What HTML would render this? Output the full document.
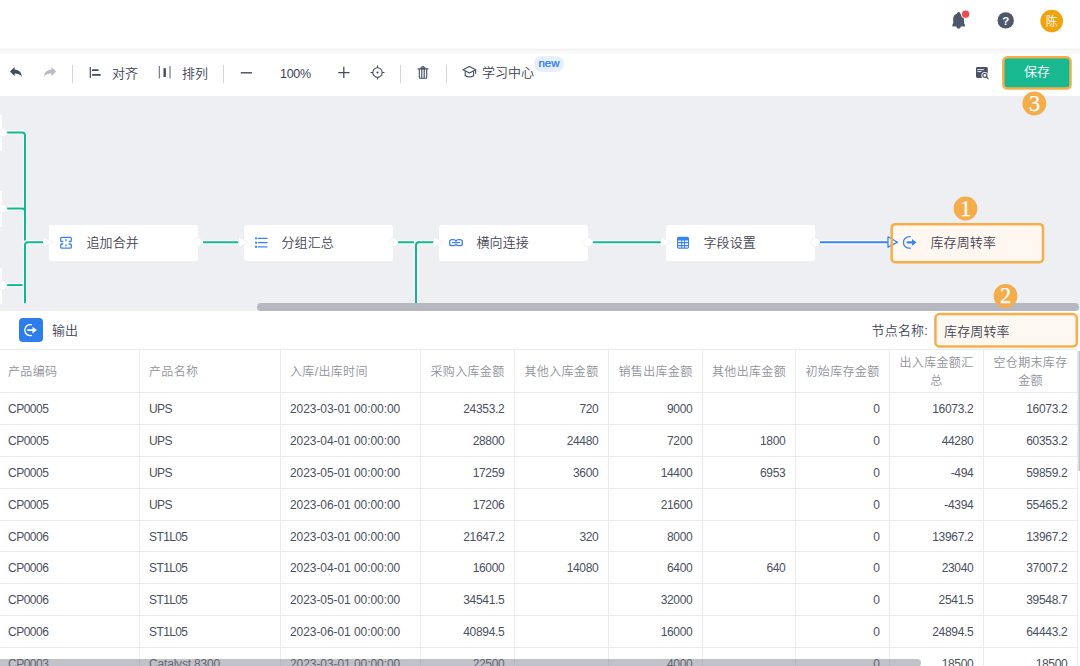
<!DOCTYPE html>
<html lang="zh-CN">
<head>
<meta charset="utf-8">
<title>库存周转率</title>
<style>
*{box-sizing:border-box;margin:0;padding:0}
html,body{width:1080px;height:666px;overflow:hidden;background:#fff}
body{position:relative;font-family:"Liberation Sans","Noto Sans CJK SC",sans-serif;color:#333;font-size:13px;font-weight:350}
.abs{position:absolute}
svg{display:block}
#topbar{left:0;top:0;width:1080px;height:49px;background:#fff}
#toolbar{left:0;top:49px;width:1080px;height:47px;background:#fff}
#tbshadow{left:0;top:48px;width:1080px;height:7px;background:linear-gradient(#fbfbfb,#f3f3f3 21%,#f8f8f8 45%,#fafafa 72%,#fff)}
.sep{width:1px;height:18px;top:65px;background:#d3d5da}
.tl{top:63px;height:20px;line-height:20px;font-size:13px;color:#3a4255;white-space:nowrap}
.newb{left:534px;top:56px;width:30px;height:16px;border-radius:8px;background:#e6effd;color:#3b82f6;font-size:11.500px;line-height:14px;text-align:center;text-shadow:0 0 .4px #3b82f6}
.save{left:1003px;top:57px;width:68px;height:32px;border-radius:5px;background:#18b991;color:#fff;font-size:13px;line-height:30px;text-align:center}
#canvas{left:0;top:96px;width:1080px;height:215px;background:#eeeff3;overflow:hidden}
.node{height:36px;width:149px;top:129px;background:#fff;border-radius:2px}
.node .t{position:absolute;left:37.400px;letter-spacing:.15px;top:0;height:36px;line-height:35px;font-size:13px;color:#3f4554;white-space:nowrap}
.node svg{position:absolute}
.hscroll{left:257px;top:207px;width:822px;height:8px;border-radius:4px;background:#b5b8c1}
#panel{left:0;top:311px;width:1080px;height:355px;background:#fff;overflow:hidden}
.obtn{left:19px;top:7px;width:24px;height:24px;border-radius:4px;background:#2f7deb}
.otitle{left:52px;top:10px;height:20px;line-height:20px;font-size:13px;color:#3f4554}
.nlabel{left:871.500px;top:10px;height:20px;line-height:20px;font-size:13px;color:#3f4554;white-space:nowrap;letter-spacing:.2px}
.ninput{left:935px;top:3px;width:142px;height:33px;border-radius:5px;background:#fff8f2;font-size:13px;line-height:35px;padding-left:9px;color:#3f4554;letter-spacing:.15px}
.vl{width:1px;top:38px;height:320px;background:#ebecee}
.hl{height:1px;left:0;width:1077px;background:#ebecee}
.th{top:40px;height:42px;font-size:12px;color:#8f929a;line-height:18px;letter-spacing:.35px;display:flex;align-items:center;white-space:nowrap}
.th.c{justify-content:center;text-align:center}
.td{height:31px;line-height:33px;font-size:12px;color:#4a5060;white-space:nowrap;letter-spacing:-0.3px}
.td.l0{letter-spacing:-0.5px}
.td.l1{letter-spacing:-0.6px}
.td.l2{letter-spacing:-0.07px}
.td.r{text-align:right}
.vthumb{left:1078px;top:40px;width:2px;height:120px;background:linear-gradient(90deg,#e9eaec,#c5c6cb 70%)}
.hthumb{left:-5px;top:348px;width:926px;height:8px;border-radius:4px;background:rgba(125,128,138,.48)}
</style>
</head>
<body>
<div id="topbar" class="abs"></div>
<div id="toolbar" class="abs"></div>
<div id="tbshadow" class="abs"></div>
<!-- bell -->
<svg class="abs" style="left:951px;top:11px;overflow:visible" width="20" height="20" viewBox="0 0 20 20"><path d="M7.600 .9C8.600 .9 9.300 1.600 9.300 2.700C11.600 3.400 13 5.200 13 7.600V12L13.900 13.800V15.600H9.800C9.800 16.900 8.800 17.800 7.600 17.800C6.400 17.800 5.500 16.900 5.500 15.600H1.400V13.800L2.200 12V7.600C2.200 5.200 3.600 3.400 5.900 2.700C5.900 1.600 6.600 .9 7.600 .9Z" fill="#4f586b"/><circle cx="14.600" cy="3.200" r="4.100" fill="#ef4a4f" stroke="#fff" stroke-width=".9"/></svg>
<svg class="abs" style="left:990px;top:0" width="90" height="48" viewBox="990 0 90 48"><circle cx="1005.700" cy="20.400" r="8.200" fill="#4f586b"/><circle cx="1051.700" cy="21.100" r="11.300" fill="#f0a30c"/><text x="1005.800" y="24.800" text-anchor="middle" font-family="'Liberation Sans',sans-serif" font-weight="bold" font-size="11.500" fill="#fff">?</text><text x="1051.700" y="25.700" text-anchor="middle" font-family="'Liberation Sans','Noto Sans CJK SC',sans-serif" font-size="12" fill="#fff">陈</text></svg>
<!-- undo / redo -->
<svg class="abs" style="left:9px;top:66px" width="14" height="12" viewBox="0 0 14 12"><path d="M5.600 1v2.600c4.400.3 6.900 2.800 7.400 7.200-1.800-2.400-4.100-3.300-7.400-3.300v2.700L1 5.600z" fill="#434c5e"/></svg>
<svg class="abs" style="left:43px;top:66px" width="14" height="12" viewBox="0 0 14 12"><path d="M8.400 1v2.600C4 3.900 1.500 6.400 1 10.800c1.800-2.400 4.100-3.300 7.400-3.300v2.700L13 5.600z" fill="#b9bcc4"/></svg>
<div class="abs sep" style="left:72px"></div>
<!-- align -->
<svg class="abs" style="left:88px;top:66px" width="14" height="13" viewBox="0 0 14 13"><path d="M2.300 .9v11.200" stroke="#434c5e" stroke-width="1.200" fill="none"/><path d="M4.800 4.200h5M4.800 8.900h7.200" stroke="#434c5e" stroke-width="1.800" fill="none" stroke-linecap="round"/></svg>
<div class="abs tl" style="left:112px;top:64px">对齐</div>
<!-- distribute -->
<svg class="abs" style="left:158px;top:65px" width="14" height="14" viewBox="0 0 14 14"><path d="M1.300 1v12.500M12 1v12.500" stroke="#596172" stroke-width="1" fill="none"/><path d="M6.700 3.200v8.800" stroke="#434c5e" stroke-width="2.400" fill="none"/></svg>
<div class="abs tl" style="left:182px;top:64px">排列</div>
<div class="abs sep" style="left:223px"></div>
<!-- minus -->
<svg class="abs" style="left:240px;top:66px" width="13" height="13" viewBox="0 0 13 13"><path d="M.8 6.800h11.300" stroke="#434c5e" stroke-width="1.400" fill="none"/></svg>
<div class="abs tl" style="left:280px;top:64px;font-size:12.500px;letter-spacing:-0.3px">100%</div>
<!-- plus -->
<svg class="abs" style="left:338px;top:66px" width="13" height="13" viewBox="0 0 13 13"><path d="M.2 6.500h11.300M5.800 .8v11.300" stroke="#434c5e" stroke-width="1.250" fill="none"/></svg>
<!-- locate -->
<svg class="abs" style="left:370px;top:65px" width="15" height="15" viewBox="0 0 15 15"><circle cx="7.500" cy="7.500" r="4.700" fill="none" stroke="#434c5e" stroke-width="1.050"/><circle cx="7.500" cy="7.500" r="1.100" fill="#434c5e"/><path d="M7.500 .5v2.600M7.500 11.900v2.600M.5 7.500h2.600M11.900 7.500h2.600" stroke="#434c5e" stroke-width="1.200" fill="none"/></svg>
<div class="abs sep" style="left:400px"></div>
<!-- trash -->
<svg class="abs" style="left:417px;top:65px" width="12" height="15" viewBox="0 0 12 15"><path d="M.6 3.900h10.800" stroke="#434c5e" stroke-width="1.200" fill="none"/><path d="M3.800 3.600C3.800 .9 8.200 .9 8.200 3.600z" fill="#7d8594" stroke="#434c5e" stroke-width="1"/><path d="M2.300 4v8.500c0 .5.300.8.800.8h5.800c.5 0 .8-.3.800-.8V4M4.800 4v9.300M7.200 4v9.300" stroke="#434c5e" stroke-width="1.100" fill="none"/></svg>
<div class="abs sep" style="left:446px"></div>
<!-- learn -->
<svg class="abs" style="left:462px;top:66px" width="15" height="13" viewBox="0 0 15 13"><path d="M7.400 .6L1 3.800L7.400 7.100L13.800 3.800z" fill="none" stroke="#434c5e" stroke-width="1.100" stroke-linejoin="round"/><path d="M3.200 5.200V9.800Q7.400 12.200 11.600 9.800V5.200M13.600 4v3.800" fill="none" stroke="#434c5e" stroke-width="1.100"/></svg>
<div class="abs tl" style="left:482px">学习中心</div>
<div class="abs newb">new</div>
<!-- preview icon -->
<svg class="abs" style="left:976px;top:66.800px" width="14" height="13" viewBox="0 0 14 13"><rect x="0" y="0" width="11.800" height="11" rx="1.400" fill="#4a5366"/><path d="M1.400 2.600h6.400M1.400 4.600h4.200" stroke="#fff" stroke-width=".9" fill="none"/><circle cx="8.900" cy="8.400" r="3.500" fill="#fff"/><circle cx="8.900" cy="8.400" r="2" fill="#fff" stroke="#4a5366" stroke-width="1.200"/><path d="M10.400 9.900l1.600 1.600" stroke="#4a5366" stroke-width="1.200" stroke-linecap="round"/></svg>
<div class="abs save">保存</div>

<div id="canvas" class="abs">
<div class="abs" style="left:0;top:18.500px;width:2px;height:36px;background:#fff"></div>
<div class="abs" style="left:0;top:95px;width:2px;height:36px;background:#fff"></div>
<div class="abs" style="left:0;top:172px;width:2px;height:36px;background:#fff"></div>
<div class="abs node" style="left:49px"><svg width="12" height="13" viewBox="0 0 12 13" style="left:11px;top:11px"><path d="M3.300 5.500H1.600Q.7 5.500 .7 4.600V2.300Q.7 1.400 1.600 1.400H10.400Q11.300 1.400 11.300 2.300V4.600Q11.300 5.500 10.400 5.500H8.700M3.300 8H1.600Q.7 8 .7 8.900V11.200Q.7 12.100 1.600 12.100H10.400Q11.300 12.100 11.300 11.200V8.900Q11.300 8 10.400 8H8.700" fill="none" stroke="#3a82f0" stroke-width="1.300"/><path d="M6 2.600L6.800 4.200L6 5.800L5.200 4.200zM6 7.700L6.800 9.300L6 10.900L5.200 9.300z" fill="#3a82f0"/></svg><div class="t">追加合并</div></div>
<div class="abs node" style="left:244px"><svg width="13" height="13" viewBox="0 0 13 13" style="left:11px;top:11px"><path d="M0 2.400h2.100M0 6.600h2.100M0 10.800h2.100" stroke="#3a82f0" stroke-width="1.900" fill="none"/><path d="M3.300 2.400h8.700M3.300 6.600h8.700M3.300 10.800h8.700" stroke="#3a82f0" stroke-width="1.300" fill="none" stroke-linecap="round"/></svg><div class="t">分组汇总</div></div>
<div class="abs node" style="left:439px"><svg width="14" height="8" viewBox="0 0 14 8" style="left:10px;top:14px"><path d="M7 2.200Q6.200 .700 4.700 .700H2.700Q.7 .7 .7 2.700V4.700Q.7 6.700 2.700 6.700H4.700Q6.200 6.700 7 5.200Q7.800 6.700 9.300 6.700H11.300Q13.300 6.700 13.300 4.700V2.700Q13.300 .7 11.300 .7H9.300Q7.800 .7 7 2.200z" fill="none" stroke="#3a82f0" stroke-width="1.300" stroke-linejoin="round"/><path d="M3.700 3.700h6.600" stroke="#3a82f0" stroke-width="1.300" stroke-linecap="round"/></svg><div class="t">横向连接</div></div>
<div class="abs node" style="left:666px"><svg width="12" height="13" viewBox="0 0 12 13" style="left:11px;top:11px"><rect x="0" y=".7" width="12" height="12" rx="1.600" fill="#3a82f0"/><path d="M1.200 4.500h3v1.400h-3zM5.200 4.500h1.900v1.400H5.200zM8.100 4.500h2.900v1.400H8.100zM1.200 7.200h3v1.700h-3zM5.200 7.200h1.900v1.700H5.200zM8.100 7.200h2.900v1.700H8.100zM1.200 10.200h3v1.400h-3zM5.200 10.200h1.900v1.400H5.200zM8.100 10.200h2.900v1.400H8.100z" fill="#fff"/></svg><div class="t">字段设置</div></div>
<div class="abs node" style="left:893px;background:#fff7f0"><svg width="15" height="14" viewBox="0 0 15 14" style="left:10px;top:10px"><path d="M7.300 1.700A5.800 5.800 0 1 0 7.300 13.100" fill="none" stroke="#3a82f0" stroke-width="1.300" stroke-linecap="round"/><path d="M4.600 7.400h5" stroke="#3a82f0" stroke-width="2.100" stroke-linecap="round"/><path d="M9 4L13.600 7.400L9 10.800z" fill="#3a82f0"/></svg><div class="t">库存周转率</div></div>
<svg class="abs" style="left:0;top:0" width="1080" height="215" viewBox="0 0 1080 215">
<g fill="none" stroke="#fff" stroke-width="4.200"><path d="M7 36.400H22Q25 36.400 25 39.400V144.500"/><path d="M7 112.600H22Q25 112.600 25 115.600V144"/><path d="M7 189.100H22.500"/><path d="M25 207V149Q25 146.200 28 146.200H43"/><path d="M203 146.200H238.500"/><path d="M398 146.200H414M418 146.200H433.500"/><path d="M416 207V149Q416 146.200 419 146.200"/><path d="M593 146.200H661"/><path d="M820 146.200H888"/></g>
<g fill="none" stroke="#10b794" stroke-width="2">
<path d="M7 36.400H22Q25 36.400 25 39.400V144.500"/>
<path d="M7 112.600H22Q25 112.600 25 115.600V144"/>
<path d="M7 189.100H22.500"/>
<path d="M25 207V149Q25 146.200 28 146.200H43"/>
<path d="M203 146.200H238.500"/>
<path d="M398 146.200H414M418 146.200H433.500"/>
<path d="M416 207V149Q416 146.200 419 146.200"/>
<path d="M593 146.200H661"/>
</g>
<path d="M820 146.200H888" stroke="#3a82f0" stroke-width="2" fill="none"/>
<g fill="#fff" stroke="#e6e7ea" stroke-width=".6">
<path d="M43.500 141L53 146.200L43.500 151z"/>
<path d="M238.500 141L248.500 146.200L238.500 151z"/>
<path d="M433.500 141L443.500 146.200L433.500 151z"/>
<path d="M661 141L671 146.200L661 151z"/>
<circle cx="2.500" cy="36.400" r="4.400"/><circle cx="2.500" cy="112.600" r="4.400"/><circle cx="2.500" cy="189.100" r="4.400"/>
<circle cx="197.800" cy="146.200" r="4.400"/><circle cx="393.200" cy="146.200" r="4.400"/><circle cx="588.200" cy="146.200" r="4.400"/><circle cx="815.200" cy="146.200" r="4.400"/>
</g>
<path d="M888 140.800L897.500 146.200L888 151.200z" fill="#fff" stroke="#3a82f0" stroke-width="1.300" stroke-linejoin="round"/>
</svg>
<div class="abs hscroll"></div>
</div>

<div id="panel" class="abs">
<div class="abs obtn"><svg width="24" height="24" viewBox="0 0 24 24"><path d="M12.300 6.700A5.500 5.500 0 1 0 12.300 17.500" fill="none" stroke="#fff" stroke-width="1.400" stroke-linecap="round"/><path d="M9 12.100h5" stroke="#fff" stroke-width="1.900" stroke-linecap="round"/><path d="M13.500 8.800L17.900 12.100L13.500 15.400z" fill="#fff"/></svg></div>
<div class="abs otitle">输出</div>
<div class="abs nlabel">节点名称:</div>
<div class="abs ninput">库存周转率</div>
<div class="abs hl" style="top:38px"></div>
<div class="abs hl" style="top:81px"></div>
<div class="abs th" style="left:8px;width:131px">产品编码</div>
<div class="abs th" style="left:149px;width:131px">产品名称</div>
<div class="abs th" style="left:290px;width:130px">入库/出库时间</div>
<div class="abs th c" style="left:421px;width:93px"><span>采购入库金额</span></div>
<div class="abs th c" style="left:515px;width:93px"><span>其他入库金额</span></div>
<div class="abs th c" style="left:609px;width:93px"><span>销售出库金额</span></div>
<div class="abs th c" style="left:703px;width:92px"><span>其他出库金额</span></div>
<div class="abs th c" style="left:796px;width:93px"><span>初始库存金额</span></div>
<div class="abs th c" style="left:890px;width:93px"><span>出入库金额汇<br>总</span></div>
<div class="abs th c" style="left:984px;width:93px"><span>空仓期末库存<br>金额</span></div>
<div class="abs hl" style="top:113px"></div>
<div class="abs td l0" style="top:82px;left:8px">CP0005</div>
<div class="abs td l1" style="top:82px;left:149px">UPS</div>
<div class="abs td l2" style="top:82px;left:290px">2023-03-01 00:00:00</div>
<div class="abs td r" style="top:82px;left:421px;width:83.5px">24353.2</div>
<div class="abs td r" style="top:82px;left:515px;width:83.5px">720</div>
<div class="abs td r" style="top:82px;left:609px;width:83.5px">9000</div>
<div class="abs td r" style="top:82px;left:796px;width:83.5px">0</div>
<div class="abs td r" style="top:82px;left:890px;width:83.5px">16073.2</div>
<div class="abs td r" style="top:82px;left:984px;width:83.5px">16073.2</div>
<div class="abs hl" style="top:145px"></div>
<div class="abs td l0" style="top:114px;left:8px">CP0005</div>
<div class="abs td l1" style="top:114px;left:149px">UPS</div>
<div class="abs td l2" style="top:114px;left:290px">2023-04-01 00:00:00</div>
<div class="abs td r" style="top:114px;left:421px;width:83.5px">28800</div>
<div class="abs td r" style="top:114px;left:515px;width:83.5px">24480</div>
<div class="abs td r" style="top:114px;left:609px;width:83.5px">7200</div>
<div class="abs td r" style="top:114px;left:703px;width:82.5px">1800</div>
<div class="abs td r" style="top:114px;left:796px;width:83.5px">0</div>
<div class="abs td r" style="top:114px;left:890px;width:83.5px">44280</div>
<div class="abs td r" style="top:114px;left:984px;width:83.5px">60353.2</div>
<div class="abs hl" style="top:177px"></div>
<div class="abs td l0" style="top:146px;left:8px">CP0005</div>
<div class="abs td l1" style="top:146px;left:149px">UPS</div>
<div class="abs td l2" style="top:146px;left:290px">2023-05-01 00:00:00</div>
<div class="abs td r" style="top:146px;left:421px;width:83.5px">17259</div>
<div class="abs td r" style="top:146px;left:515px;width:83.5px">3600</div>
<div class="abs td r" style="top:146px;left:609px;width:83.5px">14400</div>
<div class="abs td r" style="top:146px;left:703px;width:82.5px">6953</div>
<div class="abs td r" style="top:146px;left:796px;width:83.5px">0</div>
<div class="abs td r" style="top:146px;left:890px;width:83.5px">-494</div>
<div class="abs td r" style="top:146px;left:984px;width:83.5px">59859.2</div>
<div class="abs hl" style="top:209px"></div>
<div class="abs td l0" style="top:178px;left:8px">CP0005</div>
<div class="abs td l1" style="top:178px;left:149px">UPS</div>
<div class="abs td l2" style="top:178px;left:290px">2023-06-01 00:00:00</div>
<div class="abs td r" style="top:178px;left:421px;width:83.5px">17206</div>
<div class="abs td r" style="top:178px;left:609px;width:83.5px">21600</div>
<div class="abs td r" style="top:178px;left:796px;width:83.5px">0</div>
<div class="abs td r" style="top:178px;left:890px;width:83.5px">-4394</div>
<div class="abs td r" style="top:178px;left:984px;width:83.5px">55465.2</div>
<div class="abs hl" style="top:240px"></div>
<div class="abs td l0" style="top:210px;left:8px">CP0006</div>
<div class="abs td l1" style="top:210px;left:149px">ST1L05</div>
<div class="abs td l2" style="top:210px;left:290px">2023-03-01 00:00:00</div>
<div class="abs td r" style="top:210px;left:421px;width:83.5px">21647.2</div>
<div class="abs td r" style="top:210px;left:515px;width:83.5px">320</div>
<div class="abs td r" style="top:210px;left:609px;width:83.5px">8000</div>
<div class="abs td r" style="top:210px;left:796px;width:83.5px">0</div>
<div class="abs td r" style="top:210px;left:890px;width:83.5px">13967.2</div>
<div class="abs td r" style="top:210px;left:984px;width:83.5px">13967.2</div>
<div class="abs hl" style="top:272px"></div>
<div class="abs td l0" style="top:241px;left:8px">CP0006</div>
<div class="abs td l1" style="top:241px;left:149px">ST1L05</div>
<div class="abs td l2" style="top:241px;left:290px">2023-04-01 00:00:00</div>
<div class="abs td r" style="top:241px;left:421px;width:83.5px">16000</div>
<div class="abs td r" style="top:241px;left:515px;width:83.5px">14080</div>
<div class="abs td r" style="top:241px;left:609px;width:83.5px">6400</div>
<div class="abs td r" style="top:241px;left:703px;width:82.5px">640</div>
<div class="abs td r" style="top:241px;left:796px;width:83.5px">0</div>
<div class="abs td r" style="top:241px;left:890px;width:83.5px">23040</div>
<div class="abs td r" style="top:241px;left:984px;width:83.5px">37007.2</div>
<div class="abs hl" style="top:304px"></div>
<div class="abs td l0" style="top:273px;left:8px">CP0006</div>
<div class="abs td l1" style="top:273px;left:149px">ST1L05</div>
<div class="abs td l2" style="top:273px;left:290px">2023-05-01 00:00:00</div>
<div class="abs td r" style="top:273px;left:421px;width:83.5px">34541.5</div>
<div class="abs td r" style="top:273px;left:609px;width:83.5px">32000</div>
<div class="abs td r" style="top:273px;left:796px;width:83.5px">0</div>
<div class="abs td r" style="top:273px;left:890px;width:83.5px">2541.5</div>
<div class="abs td r" style="top:273px;left:984px;width:83.5px">39548.7</div>
<div class="abs hl" style="top:336px"></div>
<div class="abs td l0" style="top:305px;left:8px">CP0006</div>
<div class="abs td l1" style="top:305px;left:149px">ST1L05</div>
<div class="abs td l2" style="top:305px;left:290px">2023-06-01 00:00:00</div>
<div class="abs td r" style="top:305px;left:421px;width:83.5px">40894.5</div>
<div class="abs td r" style="top:305px;left:609px;width:83.5px">16000</div>
<div class="abs td r" style="top:305px;left:796px;width:83.5px">0</div>
<div class="abs td r" style="top:305px;left:890px;width:83.5px">24894.5</div>
<div class="abs td r" style="top:305px;left:984px;width:83.5px">64443.2</div>
<div class="abs hl" style="top:368px"></div>
<div class="abs td l0" style="top:337px;left:8px">CP0003</div>
<div class="abs td l1" style="top:337px;left:149px;letter-spacing:-0.18px">Catalyst 8300</div>
<div class="abs td l2" style="top:337px;left:290px">2023-03-01 00:00:00</div>
<div class="abs td r" style="top:337px;left:421px;width:83.5px">22500</div>
<div class="abs td r" style="top:337px;left:609px;width:83.5px">4000</div>
<div class="abs td r" style="top:337px;left:796px;width:83.5px">0</div>
<div class="abs td r" style="top:337px;left:890px;width:83.5px">18500</div>
<div class="abs td r" style="top:337px;left:984px;width:83.5px">18500</div>
<div class="abs vl" style="left:139px"></div>
<div class="abs vl" style="left:280px"></div>
<div class="abs vl" style="left:420px"></div>
<div class="abs vl" style="left:514px"></div>
<div class="abs vl" style="left:608px"></div>
<div class="abs vl" style="left:702px"></div>
<div class="abs vl" style="left:795px"></div>
<div class="abs vl" style="left:889px"></div>
<div class="abs vl" style="left:983px"></div>
<div class="abs vl" style="left:1077px"></div>
<div class="abs vthumb"></div>
<div class="abs hthumb"></div>
</div>
<svg class="abs" style="left:0;top:0" width="1080" height="666" viewBox="0 0 1080 666">
<g fill="none" stroke="#f6ae4b" stroke-width="2.500">
<rect x="891.650" y="224.150" width="151.400" height="38" rx="3.500"/>
<rect x="935.400" y="314.100" width="141.400" height="32.300" rx="4"/>
<rect x="1003.350" y="57.350" width="67.200" height="31.200" rx="4"/>
</g>
<g fill="#f4ad4a">
<circle cx="965.500" cy="208.500" r="11.900"/>
<circle cx="1005.500" cy="296" r="11.900"/>
<circle cx="1034.350" cy="103.500" r="11.900"/>
</g>
<g fill="#fff" font-family="'Liberation Serif',serif" font-size="22.300" text-anchor="middle" stroke="#fff" stroke-width=".25">
<text x="965.700" y="215.900">1</text>
<text x="1005.700" y="303.400">2</text>
<text x="1034.500" y="110.900">3</text>
</g>
</svg>
</body>
</html>
